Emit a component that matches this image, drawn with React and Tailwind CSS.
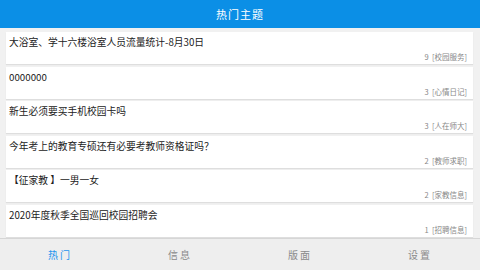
const TOPICS = [
  { title: '大浴室、学十六楼浴室人员流量统计-8月30日', count: 9, board: '校园服务' },
  { title: '0000000', count: 3, board: '心情日记' },
  { title: '新生必须要买手机校园卡吗', count: 3, board: '人在师大' },
  { title: '今年考上的教育专硕还有必要考教师资格证吗？', count: 2, board: '教师求职' },
  { title: '【征家教 】一男一女', count: 2, board: '家教信息' },
  { title: '2020年度秋季全国巡回校园招聘会', count: 1, board: '招聘信息' },
];

const TABS = ['热门', '信息', '版面', '设置'];

export default function App() {
  return (
    <div
      className="w-[480px] h-[270px] flex flex-col bg-[#f1f1f1] overflow-hidden"
      style={{ fontFamily: '"Noto Sans CJK SC", "Noto Sans", sans-serif' }}
    >
      {/* header */}
      <div className="h-[28px] shrink-0 bg-[#0b8fe6] flex items-center justify-center text-white text-[11px] tracking-[1px]">
        热门主题
      </div>

      {/* list */}
      <div className="flex-1 overflow-hidden pt-[4px] pl-[6px] pr-[7px] flex flex-col gap-[2.5px]">
        {TOPICS.map((t) => (
          <div
            key={t.title}
            className="h-[32px] shrink-0 bg-white shadow-[0_1px_1px_rgba(0,0,0,0.08)] flex flex-col justify-between px-[3px] pt-[3px] pb-[2px]"
          >
            <div className="text-[9.75px] leading-[14px] text-[#222]">{t.title}</div>
            <div className="text-[7.5px] leading-[10px] text-[#888] text-right pr-[3px]">
              {t.count}&nbsp;&nbsp;[{t.board}]
            </div>
          </div>
        ))}
      </div>

      {/* bottom tabs */}
      <div className="h-[32px] shrink-0 bg-[#eeeeee] border-t border-[#d6d6d6] grid grid-cols-4">
        {TABS.map((tab, i) => (
          <div
            key={tab}
            className={
              'flex items-center justify-center text-[10px] tracking-[2px] ' +
              (i === 0 ? 'text-[#1e95ee]' : 'text-[#8a8a8a]')
            }
          >
            {tab}
          </div>
        ))}
      </div>
    </div>
  );
}
